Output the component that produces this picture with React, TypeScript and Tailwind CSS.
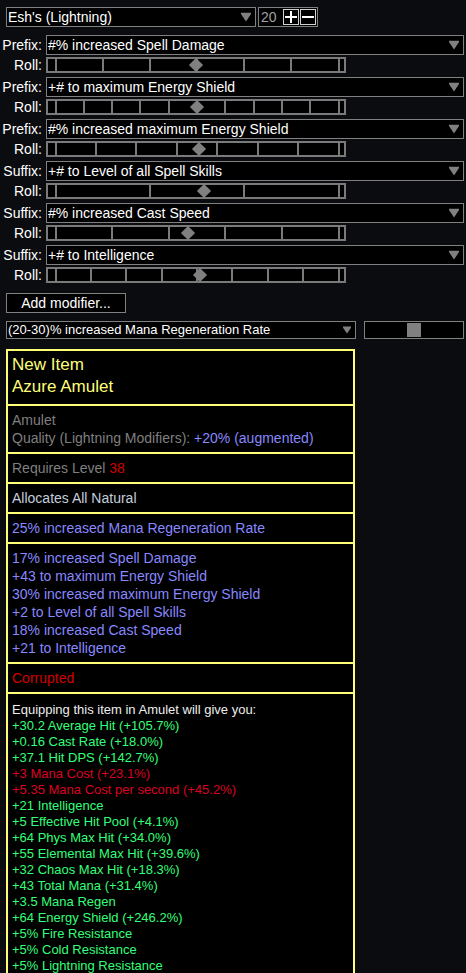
import React from "react";

const GRAY = "#808080";

function Arrow({ w = 10, h = 9 }: { w?: number; h?: number }) {
  return (
    <svg width={w} height={h} viewBox="0 0 10 9" className="block">
      <polygon points="0,0 10,0 10,1.6 5,9 0,1.6" fill={GRAY} />
    </svg>
  );
}

function Select({ text, className }: { text: string; className: string }) {
  return (
    <div className={`relative flex items-center border border-[#808080] bg-black pl-[1px] ${className}`}>
      <span className="whitespace-nowrap">{text}</span>
      <span className="absolute right-[4px] top-1/2 -translate-y-1/2">
        <Arrow />
      </span>
    </div>
  );
}

function RollSlider({ n, pos }: { n: number; pos: number }) {
  const a = 9.5;
  const b = 292.5;
  const ticks: number[] = [];
  for (let i = 0; i <= n; i++) ticks.push(a + ((b - a) * i) / n);
  return (
    <div className="relative h-[16px] w-[300px] border-2 border-[#7a7a7a] bg-black">
      {ticks.map((x, i) => (
        <div
          key={i}
          className="absolute top-0 bottom-0 w-[2px] bg-[#7a7a7a]"
          style={{ left: x - 3 }}
        />
      ))}
      <div
        className="absolute top-[1px] h-[10px] w-[10px] rotate-45 bg-[#808080]"
        style={{ left: pos - 7 }}
      />
    </div>
  );
}

const mods = [
  { kind: "Prefix:", text: "#% increased Spell Damage", n: 6, pos: 150 },
  { kind: "Prefix:", text: "+# to maximum Energy Shield", n: 10, pos: 151 },
  { kind: "Prefix:", text: "#% increased maximum Energy Shield", n: 7, pos: 153 },
  { kind: "Suffix:", text: "+# to Level of all Spell Skills", n: 3, pos: 158 },
  { kind: "Suffix:", text: "#% increased Cast Speed", n: 5, pos: 142 },
  { kind: "Suffix:", text: "+# to Intelligence", n: 8, pos: 154 },
];

const GREEN = "text-[#33ff77]";
const RED = "text-[#dd0022]";

const equip: { t: string; c: string }[] = [
  { t: "+30.2 Average Hit (+105.7%)", c: GREEN },
  { t: "+0.16 Cast Rate (+18.0%)", c: GREEN },
  { t: "+37.1 Hit DPS (+142.7%)", c: GREEN },
  { t: "+3 Mana Cost (+23.1%)", c: RED },
  { t: "+5.35 Mana Cost per second (+45.2%)", c: RED },
  { t: "+21 Intelligence", c: GREEN },
  { t: "+5 Effective Hit Pool (+4.1%)", c: GREEN },
  { t: "+64 Phys Max Hit (+34.0%)", c: GREEN },
  { t: "+55 Elemental Max Hit (+39.6%)", c: GREEN },
  { t: "+32 Chaos Max Hit (+18.3%)", c: GREEN },
  { t: "+43 Total Mana (+31.4%)", c: GREEN },
  { t: "+3.5 Mana Regen", c: GREEN },
  { t: "+64 Energy Shield (+246.2%)", c: GREEN },
  { t: "+5% Fire Resistance", c: GREEN },
  { t: "+5% Cold Resistance", c: GREEN },
  { t: "+5% Lightning Resistance", c: GREEN },
];

const itemMods = [
  "17% increased Spell Damage",
  "+43 to maximum Energy Shield",
  "30% increased maximum Energy Shield",
  "+2 to Level of all Spell Skills",
  "18% increased Cast Speed",
  "+21 to Intelligence",
];

export default function App() {
  return (
    <div className="h-[973px] w-[466px] overflow-hidden bg-[#0b0c0f] font-['Liberation_Sans',Arial,sans-serif] text-[14px] leading-[18px] text-white">
      {/* top bar */}
      <div className="flex gap-[2px] pl-[6px] pt-[7px]">
        <Select text="Esh's (Lightning)" className="h-[20px] w-[250px]" />
        <div className="flex h-[20px] w-[60px] items-center border border-[#808080] bg-black pl-[2px] pr-[1px]">
          <span className="flex-1 text-[#a0a0a0]">20</span>
          <div className="flex gap-[1px]">
            <div className="flex h-[16px] w-[16px] items-center justify-center border border-[#d0d0d0] bg-black">
              <svg width="12" height="12" viewBox="0 0 12 12">
                <rect x="5" y="0" width="2" height="12" fill="#ffffff" />
                <rect x="0" y="5" width="12" height="2" fill="#ffffff" />
              </svg>
            </div>
            <div className="flex h-[16px] w-[16px] items-center justify-center border border-[#d0d0d0] bg-black">
              <svg width="12" height="12" viewBox="0 0 12 12">
                <rect x="0" y="5" width="12" height="2" fill="#ffffff" />
              </svg>
            </div>
          </div>
        </div>
      </div>

      {/* modifiers */}
      <div className="mt-[8px] flex flex-col gap-[4px]">
        {mods.map((m, i) => (
          <div key={i} className="flex flex-col gap-[2px]">
            <div className="flex h-[20px] items-center">
              <span className="w-[42px] text-right">{m.kind}</span>
              <Select text={m.text} className="ml-[4px] h-[20px] w-[418px]" />
            </div>
            <div className="flex h-[16px] items-center leading-[16px]">
              <span className="w-[42px] text-right">Roll:</span>
              <div className="ml-[4px]">
                <RollSlider n={m.n} pos={m.pos} />
              </div>
            </div>
          </div>
        ))}
      </div>

      {/* add modifier */}
      <div className="ml-[6px] mt-[10px] flex h-[20px] w-[120px] items-center justify-center border border-[#808080] bg-black">
        Add modifier...
      </div>

      {/* mana regen row */}
      <div className="ml-[6px] mt-[8px] flex gap-[8px]">
        <div className="relative flex h-[18px] w-[350px] items-center border border-[#808080] bg-black pl-[1px] text-[13px]">
          <span className="whitespace-nowrap">(20-30)% increased Mana Regeneration Rate</span>
          <span className="absolute right-[4px] top-1/2 -translate-y-1/2">
            <Arrow w={8} h={8} />
          </span>
        </div>
        <div className="relative h-[18px] w-[100px] border border-[#808080] bg-black">
          <div className="absolute left-[42px] top-[1px] h-[14px] w-[14px] bg-[#808080]" />
        </div>
      </div>

      {/* item box */}
      <div className="ml-[6px] mt-[10px] w-[349px] border-2 border-[#ffff77] bg-black">
        <div className="px-[4px] pb-[6px] pt-[3px] text-[17px] leading-[22px] text-[#ffff77]">
          <div>New Item</div>
          <div>Azure Amulet</div>
        </div>
        <div className="border-t-2 border-[#ffff77] px-[4px] py-[5px] text-[#7f7f7f]">
          <div>Amulet</div>
          <div>
            Quality (Lightning Modifiers): <span className="text-[#8888ff]">+20% (augmented)</span>
          </div>
        </div>
        <div className="border-t-2 border-[#ffff77] px-[4px] py-[5px] text-[#7f7f7f]">
          Requires Level <span className="text-[#d20000]">38</span>
        </div>
        <div className="border-t-2 border-[#ffff77] px-[4px] py-[5px] text-[#c4cedc]">
          Allocates All Natural
        </div>
        <div className="border-t-2 border-[#ffff77] px-[4px] py-[5px] text-[#8888ff]">
          25% increased Mana Regeneration Rate
        </div>
        <div className="border-t-2 border-[#ffff77] px-[4px] py-[5px] text-[#8888ff]">
          {itemMods.map((t) => (
            <div key={t}>{t}</div>
          ))}
        </div>
        <div className="border-t-2 border-[#ffff77] px-[4px] py-[5px] text-[#d20000]">Corrupted</div>
        <div className="border-t-2 border-[#ffff77] px-[4px] pb-[8px] pt-[8px] text-[13px] leading-[16px]">
          <div className="text-[#eeeeee]">Equipping this item in Amulet will give you:</div>
          {equip.map((e) => (
            <div key={e.t} className={e.c}>
              {e.t}
            </div>
          ))}
        </div>
      </div>
    </div>
  );
}
